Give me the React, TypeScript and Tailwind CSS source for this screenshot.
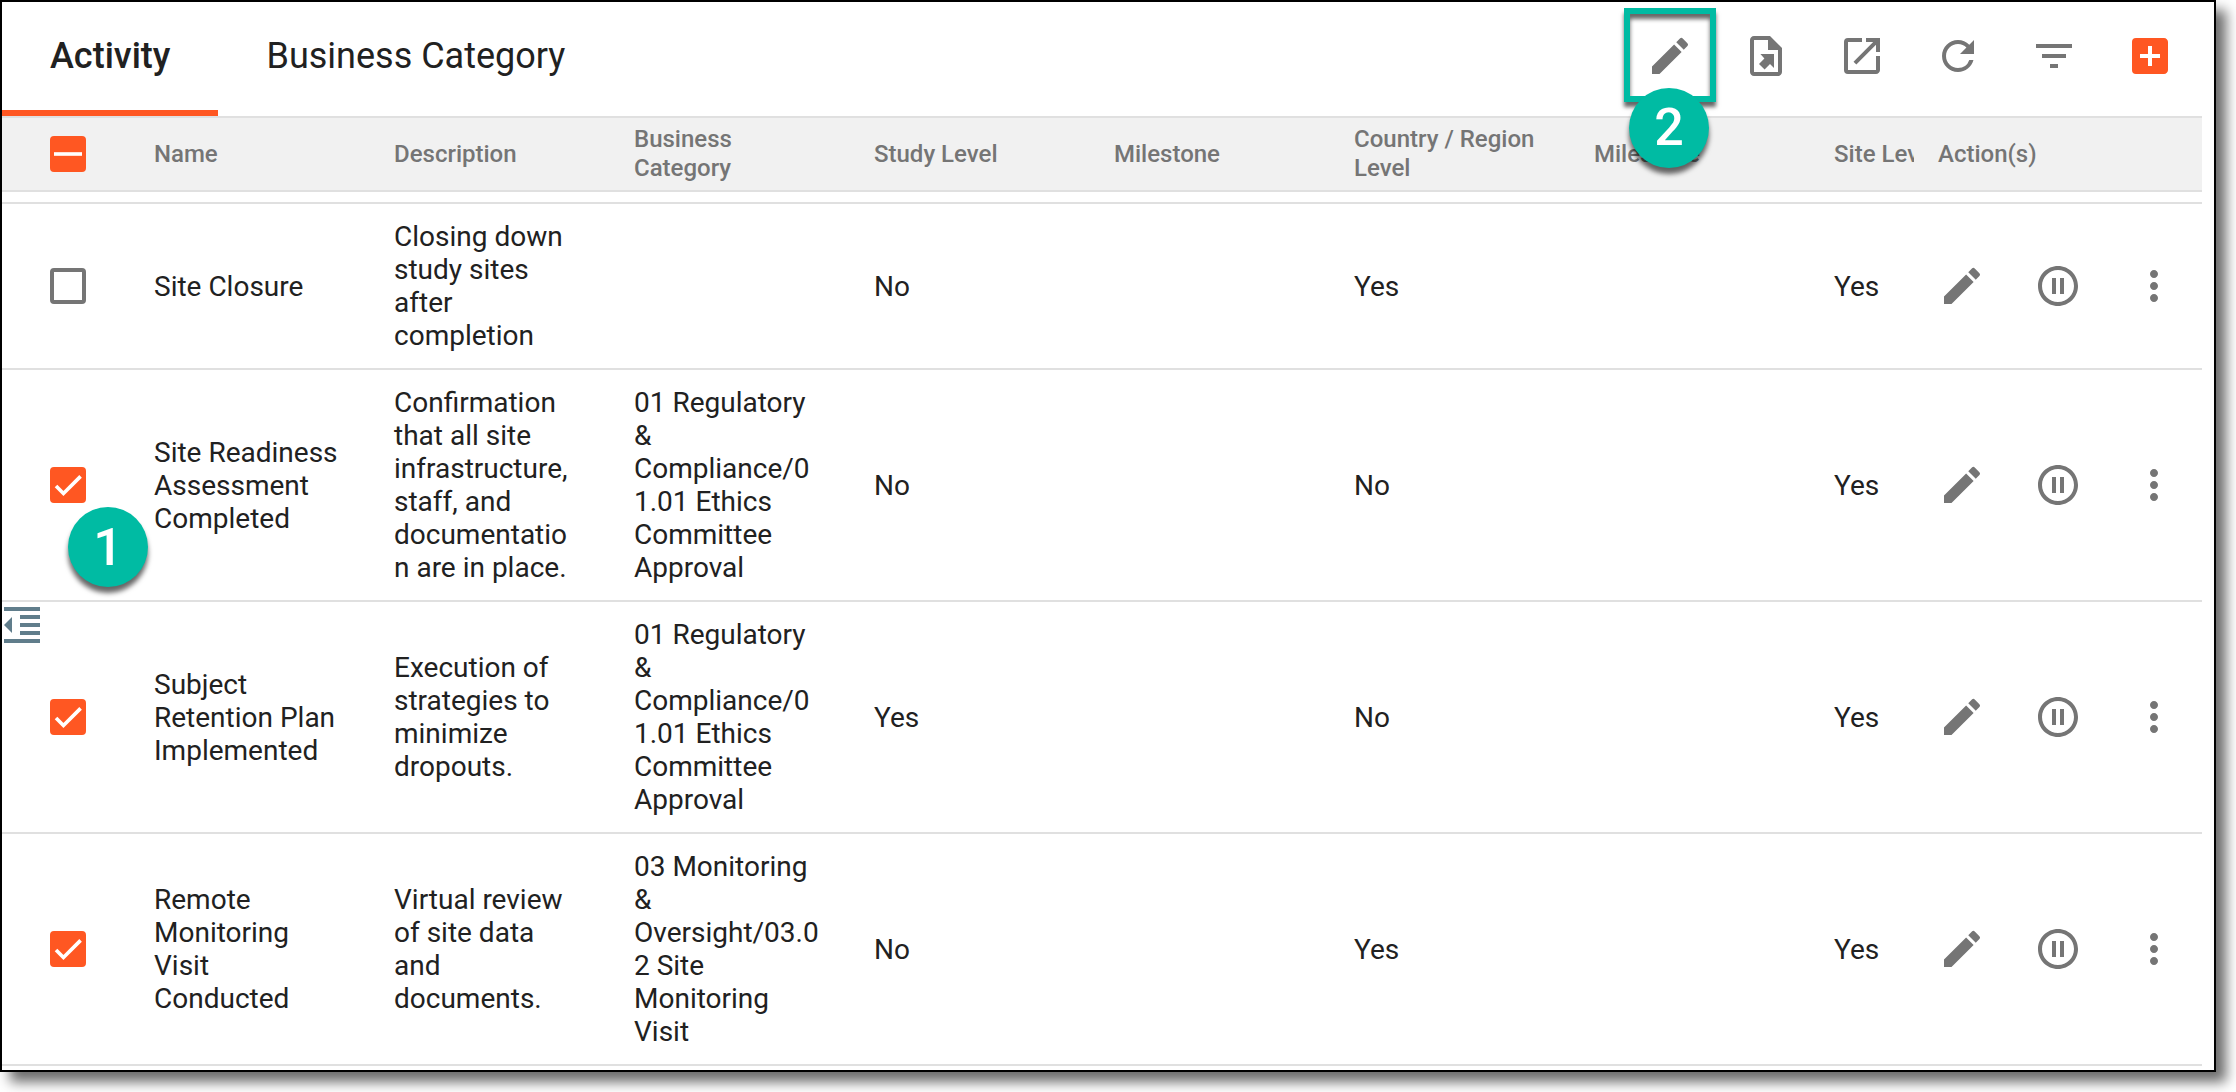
import {
  MdAddBox,
  MdEdit,
  MdFilterList,
  MdMoreVert,
  MdOpenInNew,
  MdPauseCircleOutline,
  MdRefresh,
} from "react-icons/md";

type Activity = {
  name: string;
  description: string;
  category: string;
  study: string;
  country: string;
  site: string;
  checked: boolean;
  step?: string;
};

const activities: Activity[] = [
  {
    name: "Site Closure",
    description: "Closing down study sites after completion",
    category: "",
    study: "No",
    country: "Yes",
    site: "Yes",
    checked: false,
  },
  {
    name: "Site Readiness Assessment Completed",
    description: "Confirmation that all site infrastructure, staff, and documentation are in place.",
    category: "01 Regulatory & Compliance/01.01 Ethics Committee Approval",
    study: "No",
    country: "No",
    site: "Yes",
    checked: true,
    step: "1",
  },
  {
    name: "Subject Retention Plan Implemented",
    description: "Execution of strategies to minimize dropouts.",
    category: "01 Regulatory & Compliance/01.01 Ethics Committee Approval",
    study: "Yes",
    country: "No",
    site: "Yes",
    checked: true,
  },
  {
    name: "Remote Monitoring Visit Conducted",
    description: "Virtual review of site data and documents.",
    category: "03 Monitoring & Oversight/03.02 Site Monitoring Visit",
    study: "No",
    country: "Yes",
    site: "Yes",
    checked: true,
  },
];

const headers = [
  "Name",
  "Description",
  "Business Category",
  "Study Level",
  "Milestone",
  "Country / Region Level",
  "Milestone",
];

function Checkbox({ label, checked, mixed }: { label: string; checked?: boolean; mixed?: boolean }) {
  return (
    <span className="relative block size-9">
      <input
        type="checkbox"
        aria-label={label}
        defaultChecked={checked}
        className="peer block size-9 appearance-none rounded-sm border-4 border-[#757575] checked:border-[#ff5722] checked:bg-[#ff5722]"
      />
      <svg
        viewBox="0 0 24 24"
        className="pointer-events-none absolute inset-1 hidden size-7 text-white peer-checked:block"
        fill="none"
        stroke="currentColor"
        strokeWidth="3.12"
      >
        <path d={mixed ? "M0 12h24" : "M1.73 12.91 8.1 19.28 22.79 4.59"} />
      </svg>
    </span>
  );
}

function StepBadge({ step }: { step: string }) {
  return (
    <span className="flex size-20 items-center justify-center rounded-full bg-[#00bba3] text-[52px] font-medium text-white shadow-[0_6px_5px_rgba(0,0,0,0.6)]">
      {step}
    </span>
  );
}

function FileExportIcon() {
  return (
    <svg viewBox="0 0 24 24" className="size-12" fill="currentColor">
      <path d="M14 2H6c-1.1 0-2 .9-2 2v16c0 1.1.9 2 2 2h12c1.1 0 2-.9 2-2V8l-6-6zm4 18H6V4h7v5h5v11z" />
      <path d="M16 11v7l-2-2-2.700 2.700L8.500 16l2.700-2.700L9.200 11z" />
    </svg>
  );
}

function Toolbar() {
  const button = "flex h-[108px] w-24 items-center justify-center";
  return (
    <div className="flex pr-4 text-[#757575]">
      <div className="relative">
        <button aria-label="Edit" className={button}>
          <MdEdit className="size-12" />
        </button>
        <div className="pointer-events-none absolute top-1.5 left-0.5 h-[94px] w-[92px] border-6 border-[#00bba3] shadow-[0_5px_4px_rgba(0,0,0,0.6),inset_0_5px_4px_rgba(0,0,0,0.6)]" />
        <div className="absolute top-[86px] left-[7px] z-10">
          <StepBadge step="2" />
        </div>
      </div>
      <button aria-label="Export" className={button}>
        <FileExportIcon />
      </button>
      <button aria-label="Open in new window" className={button}>
        <MdOpenInNew className="size-12" />
      </button>
      <button aria-label="Refresh" className={button}>
        <MdRefresh className="size-12" />
      </button>
      <button aria-label="Filter" className={button}>
        <MdFilterList className="size-12" />
      </button>
      <button aria-label="Add" className={button}>
        <MdAddBox className="size-12 text-[#ff5722]" />
      </button>
    </div>
  );
}

function ActivityRow({ item }: { item: Activity }) {
  const cell = "py-4 pr-[30px] pl-6 wrap-anywhere";
  const action = "flex h-24 w-24 items-center justify-center";
  return (
    <tr className="border-b-2 border-[#e0e0e0]">
      <td className="relative pl-12">
        <Checkbox label={item.name} checked={item.checked} />
        {item.step && (
          <div className="absolute top-1/2 left-[66px] mt-[22px]">
            <StepBadge step={item.step} />
          </div>
        )}
      </td>
      <td className={cell}>{item.name}</td>
      <td className={cell}>{item.description}</td>
      <td className={cell}>{item.category}</td>
      <td className={cell}>{item.study}</td>
      <td className={cell}></td>
      <td className={cell}>{item.country}</td>
      <td className={cell}></td>
      <td className="pl-6">{item.site}</td>
      <td>
        <div className="flex text-[#757575]">
          <button aria-label={`Edit ${item.name}`} className={action}>
            <MdEdit className="size-12" />
          </button>
          <button aria-label={`Pause ${item.name}`} className={action}>
            <MdPauseCircleOutline className="size-12" />
          </button>
          <button aria-label={`More actions for ${item.name}`} className={action}>
            <MdMoreVert className="size-12" />
          </button>
        </div>
      </td>
    </tr>
  );
}

function App() {
  return (
    <div className="bg-white pr-5 pb-5 font-[Roboto,sans-serif] text-[#212121]">
      <div className="relative border-2 border-black bg-white pb-1 shadow-[10px_10px_12px_rgba(0,0,0,0.58)]">
        <header className="flex justify-between">
          <nav className="flex text-4xl" role="tablist">
            <button role="tab" aria-selected="true" className="h-[114px] border-b-6 border-[#ff5722] px-12 font-medium">
              Activity
            </button>
            <button role="tab" aria-selected="false" className="h-[114px] border-b-6 border-transparent px-12">
              Business Category
            </button>
          </nav>
          <Toolbar />
        </header>

        <div className="pr-3">
          <table className="w-full table-fixed border-collapse text-[28px] leading-[33px]">
            <colgroup>
              <col className="w-32" />
              {headers.map((_, i) => (
                <col key={i} />
              ))}
              <col className="w-[104px]" />
              <col className="w-72" />
            </colgroup>
            <thead>
              <tr className="h-[74px] border-y-2 border-[#e0e0e0] bg-[#f1f1f1] text-left text-2xl leading-[29px] text-[#757575]">
                <th className="pl-12">
                  <Checkbox label="Select all activities" checked mixed />
                </th>
                {headers.map((header, i) => (
                  <th key={i} className="px-6 font-medium">
                    {header}
                  </th>
                ))}
                <th className="overflow-hidden pl-6 font-medium whitespace-nowrap">Site Level</th>
                <th className="pl-6 font-medium">Action(s)</th>
              </tr>
            </thead>
            <tbody>
              {/* tail of the row scrolled under the header */}
              <tr className="h-3 border-b-2 border-[#e0e0e0]">
                <td colSpan={10}></td>
              </tr>
              {activities.map((item) => (
                <ActivityRow key={item.name} item={item} />
              ))}
            </tbody>
          </table>
        </div>

        <button aria-label="Collapse panel" className="absolute top-[605px] left-0.5 text-[#607d8b]">
          <svg viewBox="3 3 18 18" className="size-9" fill="currentColor">
            <path d="M11 17h10v-2H11v2zm-8-5l4 4V8l-4 4zm0 9h18v-2H3v2zM3 3v2h18V3H3zm8 6h10V7H11v2zm0 4h10v-2H11v2z" />
          </svg>
        </button>
      </div>
    </div>
  );
}

export default App;
